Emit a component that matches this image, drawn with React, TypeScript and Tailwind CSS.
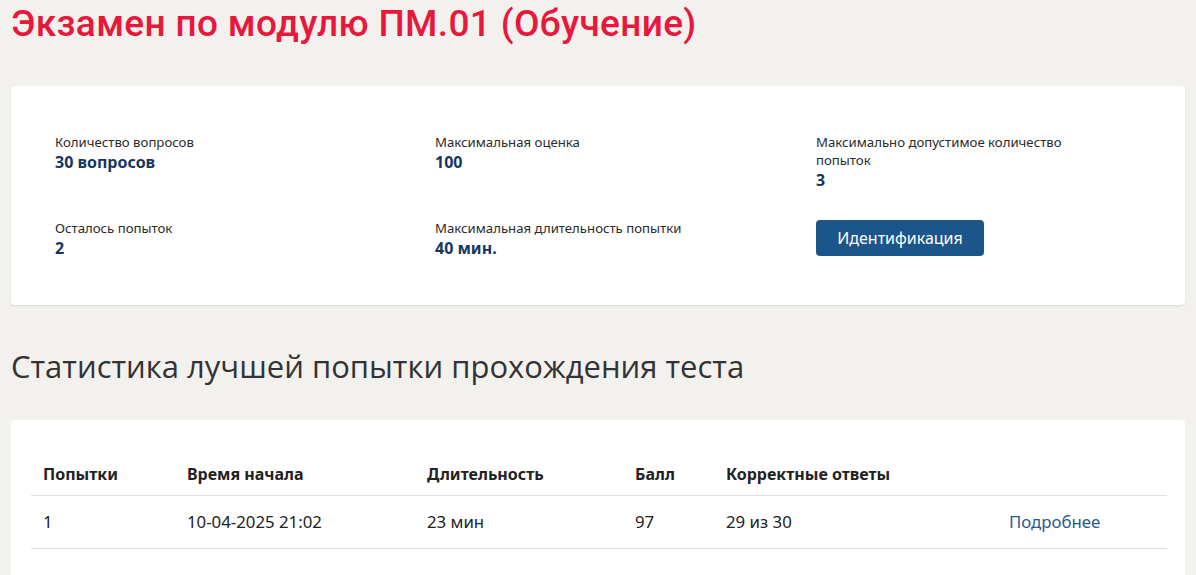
const INFO = [
  { label: "Количество вопросов", value: "30 вопросов" },
  { label: "Максимальная оценка", value: "100" },
  { label: "Максимально допустимое количество попыток", value: "3" },
  { label: "Осталось попыток", value: "2" },
  { label: "Максимальная длительность попытки", value: "40 мин." },
]

const COLS = ["w-[144px]", "w-[240px]", "w-[208px]", "w-[91px]", "w-[283px]", "flex-1"]

export default function App() {
  return (
    <div className="min-h-[575px] bg-[#f2f1ee] px-[11px] font-['Segoe_UI','Noto_Sans',sans-serif] text-[#333]">
      <h1 className="pt-[2px] font-['Roboto',sans-serif] text-[37px] font-medium leading-[44px] tracking-[0.35px] text-[#e8173c]">
        Экзамен по модулю ПМ.01 (Обучение)
      </h1>

      <section className="mt-[40px] rounded-[4px] bg-white pl-[44px] pr-[20px] pt-[47px] pb-[46px] shadow-[0_1px_2px_rgba(0,0,0,0.1)]">
        <div className="grid grid-cols-[380px_381px_1fr] gap-y-[28px]">
          {INFO.map((it) => (
            <div key={it.label} className="pr-[80px]">
              <div className="text-[13.2px] leading-[18px] text-[#2b2b2b]">{it.label}</div>
              <div className="text-[16px] font-bold leading-[22px] text-[#16365e]">{it.value}</div>
            </div>
          ))}
          <div className="pt-[1px]">
            <button className="h-[36px] w-[168px] rounded-[4px] bg-[#1b5589] text-[16px] text-white">
              Идентификация
            </button>
          </div>
        </div>
      </section>

      <h2 className="mt-[41px] font-['Open_Sans',sans-serif] text-[31px] font-normal leading-[40px] text-[#333]">
        Статистика лучшей попытки прохождения теста
      </h2>

      <section className="mt-[34px] rounded-t-[4px] bg-white pl-[20px] pr-[18px] pt-[42px] pb-[30px]">
        <div className="flex border-b border-[#e0e0e0] px-[12px] pb-[9px] text-[16px] font-bold leading-[24px] text-[#222]">
          {["Попытки", "Время начала", "Длительность", "Балл", "Корректные ответы", ""].map((h, i) => (
            <div key={i} className={COLS[i]}>{h}</div>
          ))}
        </div>
        <div className="flex border-b border-[#e0e0e0] px-[12px] py-[15px] text-[16.8px] leading-[22px] text-[#222]">
          {["1", "10-04-2025 21:02", "23 мин", "97", "29 из 30"].map((c, i) => (
            <div key={i} className={COLS[i]}>{c}</div>
          ))}
          <a className="flex-1 text-[#2a5a8c]">Подробнее</a>
        </div>
      </section>
    </div>
  )
}
